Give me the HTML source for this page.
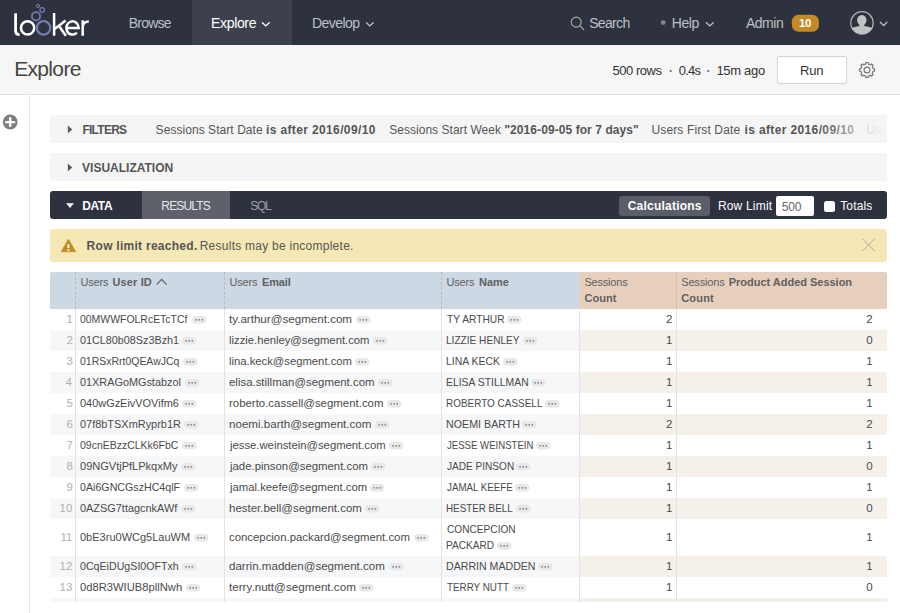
<!DOCTYPE html>
<html><head><meta charset="utf-8">
<style>
*{box-sizing:border-box;margin:0;padding:0}
html,body{width:900px;height:613px;overflow:hidden;background:#fff;font-family:"Liberation Sans",sans-serif}
.tx{position:absolute;white-space:nowrap;line-height:1}
.b{position:absolute}
.rw{position:absolute;left:50px;width:837px}
.pill{position:absolute;width:14.5px;height:7.5px;border-radius:4px;background:#e9e9ea}
.pill i{position:absolute;top:3px;width:1.6px;height:1.6px;border-radius:1px;background:#9a9a9a}
.pill i:nth-child(1){left:3.8px} .pill i:nth-child(2){left:6.5px} .pill i:nth-child(3){left:9.2px}
</style></head><body>
<!-- nav -->
<div class="b" style="left:0;top:0;width:900px;height:45px;background:#2d323e"></div>
<div class="b" style="left:192px;top:0;width:100px;height:45px;background:#3c414d"></div>
<svg class="b" style="left:0;top:0" width="900" height="45" viewBox="0 0 900 45">
 <g fill="none" stroke-linecap="round">
  <path d="M15.6,13.3 V31 Q15.6,34.6 19.6,34.6" stroke="#fff" stroke-width="2.8" stroke-linecap="butt"/>
  <circle cx="27.6" cy="27.9" r="6.6" stroke="#fff" stroke-width="2.5"/>
  <circle cx="43.6" cy="27.9" r="6.7" stroke="#717cb0" stroke-width="2.3"/>
  <circle cx="36" cy="16.3" r="4.1" stroke="#717cb0" stroke-width="1.8"/>
  <circle cx="42.2" cy="9.9" r="2.3" stroke="#717cb0" stroke-width="1.3"/>
  <circle cx="38" cy="5.9" r="1.6" stroke="#80859e" stroke-width="1"/>
  <path d="M54.1,13 V35.7" stroke="#fff" stroke-width="2.5" stroke-linecap="butt"/>
  <path d="M54.6,29 L65.6,20.4 M58.6,25.6 L65.9,35.7" stroke="#fff" stroke-width="2.5" stroke-linecap="butt"/>
  <path d="M66.5,27.9 H78.7 A6.2,6.6 0 1 0 76.9,32.6" stroke="#fff" stroke-width="2.5" stroke-linecap="butt"/>
  <path d="M82.7,20.3 V35.7 M82.7,26.5 Q83.3,21.4 88.8,21.4" stroke="#fff" stroke-width="2.5" stroke-linecap="butt"/>
  <path d="M262.4,22.7 L265.8,25.9 L269.2,22.7" stroke="#fff" stroke-width="1.35"/>
  <path d="M366.4,22.7 L369.8,25.9 L373.2,22.7" stroke="#bcc0c8" stroke-width="1.35"/>
  <path d="M706.4,22.7 L709.8,25.9 L713.2,22.7" stroke="#bcc0c8" stroke-width="1.35"/>
  <path d="M880.3,22.3 L883.6,25.6 L886.9,22.3" stroke="#c2c2c2" stroke-width="1.3"/>
  <circle cx="576.2" cy="22.1" r="5" stroke="#a9acb3" stroke-width="1.1"/>
  <path d="M579.8,25.7 L583.7,29.6" stroke="#a9acb3" stroke-width="1.2"/>
  <circle cx="862" cy="22.9" r="11.2" stroke="#b4b4b4" stroke-width="1.2"/>
 </g>
 <circle cx="663.2" cy="22.6" r="2.4" fill="#85868b"/>
 <rect x="791.8" y="14.8" width="27.2" height="17" rx="6.8" fill="#c28b26"/>
 <clipPath id="av"><circle cx="862" cy="22.9" r="11.2"/></clipPath>
 <g clip-path="url(#av)" fill="#c3c3c3">
  <ellipse cx="861.8" cy="20.2" rx="4.7" ry="5.3"/>
  <rect x="859.3" y="23" width="5" height="4"/>
  <path d="M849,40 L849,30.5 Q852,26.2 862,25.9 Q872,26.2 875,30.5 L875,40 Z"/>
 </g>
</svg>
<!-- header -->
<div class="b" style="left:0;top:45px;width:900px;height:49px;background:#f6f6f6"></div>
<div class="b" style="left:0;top:94px;width:900px;height:1px;background:#dfe0e3"></div>
<div class="b" style="left:777px;top:56px;width:70px;height:28px;background:#fff;border:1px solid #d3d3d3;border-radius:2px"></div>
<svg class="b" style="left:0;top:45px" width="900" height="48" viewBox="0 45 900 48">
 <circle cx="670.7" cy="71" r="1.1" fill="#666"/>
 <circle cx="708.2" cy="71" r="1.1" fill="#666"/>
 <path d="M865.81,62.49 L868.19,62.49 L868.24,63.92 L870.42,64.83 L871.47,63.85 L873.15,65.53 L872.17,66.58 L873.08,68.76 L874.51,68.81 L874.51,71.19 L873.08,71.24 L872.17,73.42 L873.15,74.47 L871.47,76.15 L870.42,75.17 L868.24,76.08 L868.19,77.51 L865.81,77.51 L865.76,76.08 L863.58,75.17 L862.53,76.15 L860.85,74.47 L861.83,73.42 L860.92,71.24 L859.49,71.19 L859.49,68.81 L860.92,68.76 L861.83,66.58 L860.85,65.53 L862.53,63.85 L863.58,64.83 L865.76,63.92 Z" fill="none" stroke="#787878" stroke-width="1.2" stroke-linejoin="round"/>
 <circle cx="867" cy="70" r="2.9" fill="none" stroke="#787878" stroke-width="1.2"/>
</svg>
<!-- left rail -->
<div class="b" style="left:29px;top:95px;width:1px;height:518px;background:#e3e4e7"></div>
<svg class="b" style="left:0;top:110px" width="24" height="24" viewBox="0 110 24 24">
 <circle cx="10.2" cy="122" r="7.4" fill="#7f7f82"/>
 <rect x="5.2" y="121.1" width="10" height="2.1" fill="#fff"/>
 <rect x="9" y="117.2" width="2.4" height="9.7" fill="#fff"/>
</svg>
<!-- filter / viz bars -->
<div class="b" style="left:50px;top:115px;width:837px;height:28px;background:#f5f5f5;border-radius:3px"></div>
<div class="b" style="left:50px;top:153px;width:837px;height:28px;background:#f5f5f5;border-radius:3px"></div>
<svg class="b" style="left:60px;top:120px" width="20" height="60" viewBox="60 120 20 60">
 <path d="M67.8,125.6 L72.3,129.4 L67.8,133.2 Z" fill="#5a5a5a"/>
 <path d="M67.8,163.6 L72.3,167.4 L67.8,171.2 Z" fill="#5a5a5a"/>
</svg>
<!-- data bar -->
<div class="b" style="left:50px;top:191px;width:837px;height:28px;background:#2d323e;border-radius:3px"></div>
<div class="b" style="left:142px;top:191px;width:88px;height:28px;background:#5e616a"></div>
<div class="b" style="left:619px;top:196px;width:91px;height:20px;background:#5b5e68;border-radius:3px"></div>
<div class="b" style="left:776px;top:196px;width:38px;height:20px;background:#fff;border-radius:2px"></div>
<div class="b" style="left:824.3px;top:200.5px;width:11px;height:11px;background:#fff;border-radius:2.5px"></div>
<svg class="b" style="left:60px;top:195px" width="20" height="20" viewBox="60 195 20 20">
 <path d="M66.1,203.2 L73.9,203.2 L70,207.9 Z" fill="#fff"/>
</svg>
<!-- warning -->
<div class="b" style="left:50px;top:229px;width:837px;height:33px;background:#f5e8b4;border-radius:3px"></div>
<svg class="b" style="left:55px;top:232px" width="835" height="28" viewBox="55 232 835 28">
 <path d="M68.45,239.1 L75.8,251.8 L61.1,251.8 Z" fill="#c28d27" stroke="#c28d27" stroke-width="0.6" stroke-linejoin="round"/>
 <rect x="67.55" y="244.2" width="1.8" height="3.8" fill="#fff"/>
 <rect x="67.55" y="249.1" width="1.8" height="1.8" fill="#fff"/>
 <path d="M862.3,238.6 L874.8,251.1 M874.8,238.6 L862.3,251.1" stroke="#c9bba6" stroke-width="1.1"/>
</svg>
<!-- table -->
<div class="b" style="left:50px;top:272px;width:529px;height:37px;background:#ccd8e4;border-top-left-radius:2px"></div>
<div class="b" style="left:579px;top:272px;width:308px;height:37px;background:#e6d0bd;border-top-right-radius:2px"></div>
<div class="rw" style="top:330px;height:21px;background:#f6f7f9"></div>
<div class="rw" style="top:330px;height:21px;left:579px;width:308px;background:#f6f0eb"></div>
<div class="rw" style="top:372px;height:21px;background:#f6f7f9"></div>
<div class="rw" style="top:372px;height:21px;left:579px;width:308px;background:#f6f0eb"></div>
<div class="rw" style="top:414px;height:21px;background:#f6f7f9"></div>
<div class="rw" style="top:414px;height:21px;left:579px;width:308px;background:#f6f0eb"></div>
<div class="rw" style="top:456px;height:21px;background:#f6f7f9"></div>
<div class="rw" style="top:456px;height:21px;left:579px;width:308px;background:#f6f0eb"></div>
<div class="rw" style="top:498px;height:21px;background:#f6f7f9"></div>
<div class="rw" style="top:498px;height:21px;left:579px;width:308px;background:#f6f0eb"></div>
<div class="rw" style="top:556px;height:21px;background:#f6f7f9"></div>
<div class="rw" style="top:556px;height:21px;left:579px;width:308px;background:#f6f0eb"></div>
<div class="rw" style="top:598px;height:4px;background:#f6f7f9"></div>
<div class="rw" style="top:598px;height:4px;left:579px;width:308px;background:#f6f0eb"></div>
<div class="b" style="left:75px;top:272px;width:0;height:37px;border-left:1px dashed #bdbab8"></div>
<div class="b" style="left:224px;top:272px;width:0;height:37px;border-left:1px dashed #bdbab8"></div>
<div class="b" style="left:441px;top:272px;width:0;height:37px;border-left:1px dashed #bdbab8"></div>
<div class="b" style="left:676px;top:272px;width:1px;height:37px;background:#d6bfad"></div>
<div class="b" style="left:75px;top:309px;width:1px;height:293px;background:#e3e3e3"></div>
<div class="b" style="left:224px;top:309px;width:1px;height:293px;background:#e3e3e3"></div>
<div class="b" style="left:441px;top:309px;width:1px;height:293px;background:#e3e3e3"></div>
<div class="b" style="left:579px;top:309px;width:1px;height:293px;background:#e3e3e3"></div>
<div class="b" style="left:676px;top:309px;width:1px;height:293px;background:#e3e3e3"></div>
<svg class="b" style="left:150px;top:272px" width="30" height="20" viewBox="150 272 30 20">
 <path d="M156.6,284.6 L161.6,279.3 L166.6,284.6" fill="none" stroke="#5b5b5b" stroke-width="1.1"/>
</svg>
<div class="tx" style="left:128.80px;top:16.15px;font-size:14px;color:#bcc0c8;letter-spacing:-0.800px">Browse</div>
<div class="tx" style="left:211.00px;top:16.15px;font-size:14px;color:#fff;letter-spacing:-0.333px">Explore</div>
<div class="tx" style="left:312.00px;top:16.15px;font-size:14px;color:#bcc0c8;letter-spacing:-0.567px">Develop</div>
<div class="tx" style="left:589.20px;top:16.15px;font-size:14px;color:#bcc0c8;letter-spacing:-0.660px">Search</div>
<div class="tx" style="left:671.80px;top:16.15px;font-size:14px;color:#bcc0c8;letter-spacing:-0.467px">Help</div>
<div class="tx" style="left:746.00px;top:16.15px;font-size:14px;color:#bcc0c8;letter-spacing:-0.500px">Admin</div>
<div class="tx" style="left:799.00px;top:18.27px;font-size:11.5px;font-weight:bold;color:#fff;letter-spacing:-0.400px">10</div>
<div class="tx" style="left:14.20px;top:58.22px;font-size:21px;color:#444;letter-spacing:-0.667px">Explore</div>
<div class="tx" style="left:612.60px;top:64.00px;font-size:13px;color:#333;letter-spacing:-0.486px">500 rows</div>
<div class="tx" style="left:678.70px;top:64.00px;font-size:13px;color:#333;letter-spacing:-0.767px">0.4s</div>
<div class="tx" style="left:716.40px;top:64.00px;font-size:13px;color:#333;letter-spacing:-0.300px">15m ago</div>
<div class="tx" style="left:800.00px;top:64.00px;font-size:13px;color:#333;letter-spacing:-0.150px">Run</div>
<div class="tx" style="left:82.40px;top:123.84px;font-size:12px;font-weight:bold;color:#555;letter-spacing:-0.733px">FILTERS</div>
<div class="tx" style="left:155.60px;top:123.84px;font-size:12px;color:#555;letter-spacing:0.056px">Sessions Start Date</div>
<div class="tx" style="left:266.00px;top:123.84px;font-size:12px;font-weight:bold;color:#555;letter-spacing:0.367px">is after 2016/09/10</div>
<div class="tx" style="left:389.20px;top:123.84px;font-size:12px;color:#555;letter-spacing:0.033px">Sessions Start Week</div>
<div class="tx" style="left:504.30px;top:123.84px;font-size:12px;font-weight:bold;color:#555;letter-spacing:0.077px">"2016-09-05 for 7 days"</div>
<div class="tx" style="left:651.50px;top:123.84px;font-size:12px;color:#555;letter-spacing:0.127px">Users First Date</div>
<div class="tx" style="left:744.50px;top:123.84px;font-size:12px;font-weight:bold;color:#555;letter-spacing:0.367px">is after 2016/09/10</div>
<div class="tx" style="left:866.60px;top:123.84px;font-size:12px;color:#555;letter-spacing:0.000px">Users</div>
<div class="tx" style="left:82.10px;top:161.84px;font-size:12px;font-weight:bold;color:#555;letter-spacing:0.000px">VISUALIZATION</div>
<div class="tx" style="left:82.30px;top:199.84px;font-size:12px;font-weight:bold;color:#fff;letter-spacing:-0.433px">DATA</div>
<div class="tx" style="left:161.30px;top:199.84px;font-size:12px;color:#e6e7ea;letter-spacing:-0.833px">RESULTS</div>
<div class="tx" style="left:250.30px;top:199.84px;font-size:12px;color:#9c9fa6;letter-spacing:-1.300px">SQL</div>
<div class="tx" style="left:627.70px;top:199.84px;font-size:12px;font-weight:bold;color:#fff;letter-spacing:0.227px">Calculations</div>
<div class="tx" style="left:717.90px;top:199.84px;font-size:12px;color:#fff;letter-spacing:0.188px">Row Limit</div>
<div class="tx" style="left:781.70px;top:200.84px;font-size:12px;color:#666;letter-spacing:-0.200px">500</div>
<div class="tx" style="left:840.20px;top:199.84px;font-size:12px;color:#fff;letter-spacing:0.160px">Totals</div>
<div class="tx" style="left:86.60px;top:239.84px;font-size:12px;font-weight:bold;color:#555;letter-spacing:0.271px">Row limit reached.</div>
<div class="tx" style="left:199.70px;top:239.84px;font-size:12px;color:#555;letter-spacing:0.252px">Results may be incomplete.</div>
<div class="tx" style="left:80.50px;top:276.69px;font-size:11px;color:#606060;letter-spacing:-0.188px">Users</div>
<div class="tx" style="left:112.50px;top:276.69px;font-size:11px;font-weight:bold;color:#606060;letter-spacing:0.125px">User ID</div>
<div class="tx" style="left:229.50px;top:276.69px;font-size:11px;color:#606060;letter-spacing:-0.188px">Users</div>
<div class="tx" style="left:262.00px;top:276.69px;font-size:11px;font-weight:bold;color:#606060;letter-spacing:-0.125px">Email</div>
<div class="tx" style="left:446.50px;top:276.69px;font-size:11px;color:#606060;letter-spacing:-0.188px">Users</div>
<div class="tx" style="left:479.00px;top:276.69px;font-size:11px;font-weight:bold;color:#606060;letter-spacing:0.000px">Name</div>
<div class="tx" style="left:584.50px;top:276.69px;font-size:11px;color:#606060;letter-spacing:-0.214px">Sessions</div>
<div class="tx" style="left:584.50px;top:292.69px;font-size:11px;font-weight:bold;color:#606060;letter-spacing:0.025px">Count</div>
<div class="tx" style="left:681.20px;top:276.69px;font-size:11px;color:#606060;letter-spacing:-0.143px">Sessions</div>
<div class="tx" style="left:728.80px;top:276.69px;font-size:11px;font-weight:bold;color:#606060;letter-spacing:-0.020px">Product Added Session</div>
<div class="tx" style="left:681.20px;top:292.69px;font-size:11px;font-weight:bold;color:#606060;letter-spacing:0.200px">Count</div>
<div class="tx" style="left:66.50px;top:314.27px;font-size:11.5px;color:#b0b0b0;letter-spacing:0.000px">1</div>
<div class="tx" style="left:80.20px;top:314.27px;font-size:11.5px;color:#4a4a4a;transform:scaleX(0.9084);transform-origin:0 0">00MWWFOLRcETcTCf</div>
<div class="tx" style="left:229.40px;top:314.27px;font-size:11.5px;color:#4a4a4a;transform:scaleX(1.0082);transform-origin:0 0">ty.arthur@segment.com</div>
<div class="tx" style="left:446.60px;top:314.27px;font-size:11.5px;color:#4a4a4a;transform:scaleX(0.8891);transform-origin:0 0">TY ARTHUR</div>
<div class="tx" style="left:666.00px;top:314.27px;font-size:11.5px;color:#4a4a4a;letter-spacing:0.000px">2</div>
<div class="tx" style="left:866.20px;top:314.27px;font-size:11.5px;color:#4a4a4a;letter-spacing:0.000px">2</div>
<div class="tx" style="left:66.50px;top:335.27px;font-size:11.5px;color:#b0b0b0;letter-spacing:0.000px">2</div>
<div class="tx" style="left:80.20px;top:335.27px;font-size:11.5px;color:#4a4a4a;transform:scaleX(0.9390);transform-origin:0 0">01CL80b08Sz3Bzh1</div>
<div class="tx" style="left:229.40px;top:335.27px;font-size:11.5px;color:#4a4a4a;transform:scaleX(0.9797);transform-origin:0 0">lizzie.henley@segment.com</div>
<div class="tx" style="left:445.72px;top:335.27px;font-size:11.5px;color:#4a4a4a;transform:scaleX(0.8783);transform-origin:0 0">LIZZIE HENLEY</div>
<div class="tx" style="left:666.00px;top:335.27px;font-size:11.5px;color:#4a4a4a;letter-spacing:0.000px">1</div>
<div class="tx" style="left:866.20px;top:335.27px;font-size:11.5px;color:#4a4a4a;letter-spacing:0.000px">0</div>
<div class="tx" style="left:66.50px;top:356.27px;font-size:11.5px;color:#b0b0b0;letter-spacing:0.000px">3</div>
<div class="tx" style="left:80.20px;top:356.27px;font-size:11.5px;color:#4a4a4a;transform:scaleX(0.9110);transform-origin:0 0">01RSxRrt0QEAwJCq</div>
<div class="tx" style="left:229.40px;top:356.27px;font-size:11.5px;color:#4a4a4a;transform:scaleX(0.9800);transform-origin:0 0">lina.keck@segment.com</div>
<div class="tx" style="left:445.69px;top:356.27px;font-size:11.5px;color:#4a4a4a;transform:scaleX(0.9086);transform-origin:0 0">LINA KECK</div>
<div class="tx" style="left:666.00px;top:356.27px;font-size:11.5px;color:#4a4a4a;letter-spacing:0.000px">1</div>
<div class="tx" style="left:866.20px;top:356.27px;font-size:11.5px;color:#4a4a4a;letter-spacing:0.000px">1</div>
<div class="tx" style="left:65.50px;top:377.27px;font-size:11.5px;color:#b0b0b0;letter-spacing:0.000px">4</div>
<div class="tx" style="left:80.20px;top:377.27px;font-size:11.5px;color:#4a4a4a;transform:scaleX(0.9449);transform-origin:0 0">01XRAGoMGstabzol</div>
<div class="tx" style="left:229.40px;top:377.27px;font-size:11.5px;color:#4a4a4a;transform:scaleX(0.9932);transform-origin:0 0">elisa.stillman@segment.com</div>
<div class="tx" style="left:445.70px;top:377.27px;font-size:11.5px;color:#4a4a4a;transform:scaleX(0.9044);transform-origin:0 0">ELISA STILLMAN</div>
<div class="tx" style="left:666.00px;top:377.27px;font-size:11.5px;color:#4a4a4a;letter-spacing:0.000px">1</div>
<div class="tx" style="left:866.20px;top:377.27px;font-size:11.5px;color:#4a4a4a;letter-spacing:0.000px">1</div>
<div class="tx" style="left:66.50px;top:398.27px;font-size:11.5px;color:#b0b0b0;letter-spacing:0.000px">5</div>
<div class="tx" style="left:80.20px;top:398.27px;font-size:11.5px;color:#4a4a4a;transform:scaleX(0.9510);transform-origin:0 0">040wGzEivVOVifm6</div>
<div class="tx" style="left:229.40px;top:398.27px;font-size:11.5px;color:#4a4a4a;transform:scaleX(0.9935);transform-origin:0 0">roberto.cassell@segment.com</div>
<div class="tx" style="left:445.73px;top:398.27px;font-size:11.5px;color:#4a4a4a;transform:scaleX(0.8655);transform-origin:0 0">ROBERTO CASSELL</div>
<div class="tx" style="left:666.00px;top:398.27px;font-size:11.5px;color:#4a4a4a;letter-spacing:0.000px">1</div>
<div class="tx" style="left:866.20px;top:398.27px;font-size:11.5px;color:#4a4a4a;letter-spacing:0.000px">1</div>
<div class="tx" style="left:66.50px;top:419.27px;font-size:11.5px;color:#b0b0b0;letter-spacing:0.000px">6</div>
<div class="tx" style="left:80.20px;top:419.27px;font-size:11.5px;color:#4a4a4a;transform:scaleX(0.9509);transform-origin:0 0">07f8bTSXmRyprb1R</div>
<div class="tx" style="left:229.40px;top:419.27px;font-size:11.5px;color:#4a4a4a;transform:scaleX(1.0071);transform-origin:0 0">noemi.barth@segment.com</div>
<div class="tx" style="left:445.67px;top:419.27px;font-size:11.5px;color:#4a4a4a;transform:scaleX(0.9295);transform-origin:0 0">NOEMI BARTH</div>
<div class="tx" style="left:666.00px;top:419.27px;font-size:11.5px;color:#4a4a4a;letter-spacing:0.000px">2</div>
<div class="tx" style="left:866.20px;top:419.27px;font-size:11.5px;color:#4a4a4a;letter-spacing:0.000px">2</div>
<div class="tx" style="left:66.50px;top:440.27px;font-size:11.5px;color:#b0b0b0;letter-spacing:0.000px">7</div>
<div class="tx" style="left:80.20px;top:440.27px;font-size:11.5px;color:#4a4a4a;transform:scaleX(0.9102);transform-origin:0 0">09cnEBzzCLKk6FbC</div>
<div class="tx" style="left:230.38px;top:440.27px;font-size:11.5px;color:#4a4a4a;transform:scaleX(0.9811);transform-origin:0 0">jesse.weinstein@segment.com</div>
<div class="tx" style="left:446.60px;top:440.27px;font-size:11.5px;color:#4a4a4a;transform:scaleX(0.8350);transform-origin:0 0">JESSE WEINSTEIN</div>
<div class="tx" style="left:666.00px;top:440.27px;font-size:11.5px;color:#4a4a4a;letter-spacing:0.000px">1</div>
<div class="tx" style="left:866.20px;top:440.27px;font-size:11.5px;color:#4a4a4a;letter-spacing:0.000px">1</div>
<div class="tx" style="left:66.50px;top:461.27px;font-size:11.5px;color:#b0b0b0;letter-spacing:0.000px">8</div>
<div class="tx" style="left:80.20px;top:461.27px;font-size:11.5px;color:#4a4a4a;transform:scaleX(0.9588);transform-origin:0 0">09NGVtjPfLPkqxMy</div>
<div class="tx" style="left:230.39px;top:461.27px;font-size:11.5px;color:#4a4a4a;transform:scaleX(0.9886);transform-origin:0 0">jade.pinson@segment.com</div>
<div class="tx" style="left:446.60px;top:461.27px;font-size:11.5px;color:#4a4a4a;transform:scaleX(0.8763);transform-origin:0 0">JADE PINSON</div>
<div class="tx" style="left:666.00px;top:461.27px;font-size:11.5px;color:#4a4a4a;letter-spacing:0.000px">1</div>
<div class="tx" style="left:866.20px;top:461.27px;font-size:11.5px;color:#4a4a4a;letter-spacing:0.000px">0</div>
<div class="tx" style="left:66.50px;top:482.27px;font-size:11.5px;color:#b0b0b0;letter-spacing:0.000px">9</div>
<div class="tx" style="left:80.20px;top:482.27px;font-size:11.5px;color:#4a4a4a;transform:scaleX(0.9269);transform-origin:0 0">0Ai6GNCGszHC4qlF</div>
<div class="tx" style="left:230.38px;top:482.27px;font-size:11.5px;color:#4a4a4a;transform:scaleX(0.9829);transform-origin:0 0">jamal.keefe@segment.com</div>
<div class="tx" style="left:446.60px;top:482.27px;font-size:11.5px;color:#4a4a4a;transform:scaleX(0.8481);transform-origin:0 0">JAMAL KEEFE</div>
<div class="tx" style="left:666.00px;top:482.27px;font-size:11.5px;color:#4a4a4a;letter-spacing:0.000px">1</div>
<div class="tx" style="left:866.20px;top:482.27px;font-size:11.5px;color:#4a4a4a;letter-spacing:0.000px">1</div>
<div class="tx" style="left:59.50px;top:503.27px;font-size:11.5px;color:#b0b0b0;letter-spacing:0.000px">10</div>
<div class="tx" style="left:80.20px;top:503.27px;font-size:11.5px;color:#4a4a4a;transform:scaleX(0.9495);transform-origin:0 0">0AZSG7ttagcnkAWf</div>
<div class="tx" style="left:229.40px;top:503.27px;font-size:11.5px;color:#4a4a4a;transform:scaleX(0.9977);transform-origin:0 0">hester.bell@segment.com</div>
<div class="tx" style="left:445.75px;top:503.27px;font-size:11.5px;color:#4a4a4a;transform:scaleX(0.8545);transform-origin:0 0">HESTER BELL</div>
<div class="tx" style="left:666.00px;top:503.27px;font-size:11.5px;color:#4a4a4a;letter-spacing:0.000px">1</div>
<div class="tx" style="left:866.20px;top:503.27px;font-size:11.5px;color:#4a4a4a;letter-spacing:0.000px">0</div>
<div class="tx" style="left:60.50px;top:532.27px;font-size:11.5px;color:#b0b0b0;letter-spacing:0.000px">11</div>
<div class="tx" style="left:80.20px;top:532.27px;font-size:11.5px;color:#4a4a4a;transform:scaleX(0.9574);transform-origin:0 0">0bE3ru0WCg5LauWM</div>
<div class="tx" style="left:229.40px;top:532.27px;font-size:11.5px;color:#4a4a4a;transform:scaleX(0.9885);transform-origin:0 0">concepcion.packard@segment.com</div>
<div class="tx" style="left:446.60px;top:524.27px;font-size:11.5px;color:#4a4a4a;transform:scaleX(0.8808);transform-origin:0 0">CONCEPCION</div>
<div class="tx" style="left:445.72px;top:540.27px;font-size:11.5px;color:#4a4a4a;transform:scaleX(0.8759);transform-origin:0 0">PACKARD</div>
<div class="tx" style="left:666.00px;top:532.27px;font-size:11.5px;color:#4a4a4a;letter-spacing:0.000px">1</div>
<div class="tx" style="left:866.20px;top:532.27px;font-size:11.5px;color:#4a4a4a;letter-spacing:0.000px">1</div>
<div class="tx" style="left:59.50px;top:561.27px;font-size:11.5px;color:#b0b0b0;letter-spacing:0.000px">12</div>
<div class="tx" style="left:80.20px;top:561.27px;font-size:11.5px;color:#4a4a4a;transform:scaleX(0.9255);transform-origin:0 0">0CqEiDUgSI0OFTxh</div>
<div class="tx" style="left:229.40px;top:561.27px;font-size:11.5px;color:#4a4a4a;transform:scaleX(1.0065);transform-origin:0 0">darrin.madden@segment.com</div>
<div class="tx" style="left:445.68px;top:561.27px;font-size:11.5px;color:#4a4a4a;transform:scaleX(0.9219);transform-origin:0 0">DARRIN MADDEN</div>
<div class="tx" style="left:666.00px;top:561.27px;font-size:11.5px;color:#4a4a4a;letter-spacing:0.000px">1</div>
<div class="tx" style="left:866.20px;top:561.27px;font-size:11.5px;color:#4a4a4a;letter-spacing:0.000px">1</div>
<div class="tx" style="left:59.50px;top:582.27px;font-size:11.5px;color:#b0b0b0;letter-spacing:0.000px">13</div>
<div class="tx" style="left:80.20px;top:582.27px;font-size:11.5px;color:#4a4a4a;transform:scaleX(0.9743);transform-origin:0 0">0d8R3WIUB8pllNwh</div>
<div class="tx" style="left:229.40px;top:582.27px;font-size:11.5px;color:#4a4a4a;transform:scaleX(1.0128);transform-origin:0 0">terry.nutt@segment.com</div>
<div class="tx" style="left:446.60px;top:582.27px;font-size:11.5px;color:#4a4a4a;transform:scaleX(0.8548);transform-origin:0 0">TERRY NUTT</div>
<div class="tx" style="left:666.00px;top:582.27px;font-size:11.5px;color:#4a4a4a;letter-spacing:0.000px">1</div>
<div class="tx" style="left:866.20px;top:582.27px;font-size:11.5px;color:#4a4a4a;letter-spacing:0.000px">0</div>
<svg class="b" style="left:191.50px;top:316.30px" width="15" height="8" viewBox="0 0 15 8"><rect x="0" y="0" width="14.5" height="7.5" rx="3.75" fill="#e8e8e9"/><circle cx="4.1" cy="3.8" r="0.9" fill="#808080"/><circle cx="7.15" cy="3.8" r="0.9" fill="#808080"/><circle cx="10.3" cy="3.8" r="0.9" fill="#808080"/></svg>
<svg class="b" style="left:355.60px;top:316.30px" width="15" height="8" viewBox="0 0 15 8"><rect x="0" y="0" width="14.5" height="7.5" rx="3.75" fill="#e8e8e9"/><circle cx="4.1" cy="3.8" r="0.9" fill="#808080"/><circle cx="7.15" cy="3.8" r="0.9" fill="#808080"/><circle cx="10.3" cy="3.8" r="0.9" fill="#808080"/></svg>
<svg class="b" style="left:506.70px;top:316.30px" width="15" height="8" viewBox="0 0 15 8"><rect x="0" y="0" width="14.5" height="7.5" rx="3.75" fill="#e8e8e9"/><circle cx="4.1" cy="3.8" r="0.9" fill="#808080"/><circle cx="7.15" cy="3.8" r="0.9" fill="#808080"/><circle cx="10.3" cy="3.8" r="0.9" fill="#808080"/></svg>
<svg class="b" style="left:182.00px;top:337.30px" width="15" height="8" viewBox="0 0 15 8"><rect x="0" y="0" width="14.5" height="7.5" rx="3.75" fill="#e8e8e9"/><circle cx="4.1" cy="3.8" r="0.9" fill="#808080"/><circle cx="7.15" cy="3.8" r="0.9" fill="#808080"/><circle cx="10.3" cy="3.8" r="0.9" fill="#808080"/></svg>
<svg class="b" style="left:372.70px;top:337.30px" width="15" height="8" viewBox="0 0 15 8"><rect x="0" y="0" width="14.5" height="7.5" rx="3.75" fill="#e8e8e9"/><circle cx="4.1" cy="3.8" r="0.9" fill="#808080"/><circle cx="7.15" cy="3.8" r="0.9" fill="#808080"/><circle cx="10.3" cy="3.8" r="0.9" fill="#808080"/></svg>
<svg class="b" style="left:522.70px;top:337.30px" width="15" height="8" viewBox="0 0 15 8"><rect x="0" y="0" width="14.5" height="7.5" rx="3.75" fill="#e8e8e9"/><circle cx="4.1" cy="3.8" r="0.9" fill="#808080"/><circle cx="7.15" cy="3.8" r="0.9" fill="#808080"/><circle cx="10.3" cy="3.8" r="0.9" fill="#808080"/></svg>
<svg class="b" style="left:182.70px;top:358.30px" width="15" height="8" viewBox="0 0 15 8"><rect x="0" y="0" width="14.5" height="7.5" rx="3.75" fill="#e8e8e9"/><circle cx="4.1" cy="3.8" r="0.9" fill="#808080"/><circle cx="7.15" cy="3.8" r="0.9" fill="#808080"/><circle cx="10.3" cy="3.8" r="0.9" fill="#808080"/></svg>
<svg class="b" style="left:355.10px;top:358.30px" width="15" height="8" viewBox="0 0 15 8"><rect x="0" y="0" width="14.5" height="7.5" rx="3.75" fill="#e8e8e9"/><circle cx="4.1" cy="3.8" r="0.9" fill="#808080"/><circle cx="7.15" cy="3.8" r="0.9" fill="#808080"/><circle cx="10.3" cy="3.8" r="0.9" fill="#808080"/></svg>
<svg class="b" style="left:502.50px;top:358.30px" width="15" height="8" viewBox="0 0 15 8"><rect x="0" y="0" width="14.5" height="7.5" rx="3.75" fill="#e8e8e9"/><circle cx="4.1" cy="3.8" r="0.9" fill="#808080"/><circle cx="7.15" cy="3.8" r="0.9" fill="#808080"/><circle cx="10.3" cy="3.8" r="0.9" fill="#808080"/></svg>
<svg class="b" style="left:184.50px;top:379.30px" width="15" height="8" viewBox="0 0 15 8"><rect x="0" y="0" width="14.5" height="7.5" rx="3.75" fill="#e8e8e9"/><circle cx="4.1" cy="3.8" r="0.9" fill="#808080"/><circle cx="7.15" cy="3.8" r="0.9" fill="#808080"/><circle cx="10.3" cy="3.8" r="0.9" fill="#808080"/></svg>
<svg class="b" style="left:377.60px;top:379.30px" width="15" height="8" viewBox="0 0 15 8"><rect x="0" y="0" width="14.5" height="7.5" rx="3.75" fill="#e8e8e9"/><circle cx="4.1" cy="3.8" r="0.9" fill="#808080"/><circle cx="7.15" cy="3.8" r="0.9" fill="#808080"/><circle cx="10.3" cy="3.8" r="0.9" fill="#808080"/></svg>
<svg class="b" style="left:531.20px;top:379.30px" width="15" height="8" viewBox="0 0 15 8"><rect x="0" y="0" width="14.5" height="7.5" rx="3.75" fill="#e8e8e9"/><circle cx="4.1" cy="3.8" r="0.9" fill="#808080"/><circle cx="7.15" cy="3.8" r="0.9" fill="#808080"/><circle cx="10.3" cy="3.8" r="0.9" fill="#808080"/></svg>
<svg class="b" style="left:182.30px;top:400.30px" width="15" height="8" viewBox="0 0 15 8"><rect x="0" y="0" width="14.5" height="7.5" rx="3.75" fill="#e8e8e9"/><circle cx="4.1" cy="3.8" r="0.9" fill="#808080"/><circle cx="7.15" cy="3.8" r="0.9" fill="#808080"/><circle cx="10.3" cy="3.8" r="0.9" fill="#808080"/></svg>
<svg class="b" style="left:386.60px;top:400.30px" width="15" height="8" viewBox="0 0 15 8"><rect x="0" y="0" width="14.5" height="7.5" rx="3.75" fill="#e8e8e9"/><circle cx="4.1" cy="3.8" r="0.9" fill="#808080"/><circle cx="7.15" cy="3.8" r="0.9" fill="#808080"/><circle cx="10.3" cy="3.8" r="0.9" fill="#808080"/></svg>
<svg class="b" style="left:545.00px;top:400.30px" width="15" height="8" viewBox="0 0 15 8"><rect x="0" y="0" width="14.5" height="7.5" rx="3.75" fill="#e8e8e9"/><circle cx="4.1" cy="3.8" r="0.9" fill="#808080"/><circle cx="7.15" cy="3.8" r="0.9" fill="#808080"/><circle cx="10.3" cy="3.8" r="0.9" fill="#808080"/></svg>
<svg class="b" style="left:184.20px;top:421.30px" width="15" height="8" viewBox="0 0 15 8"><rect x="0" y="0" width="14.5" height="7.5" rx="3.75" fill="#e8e8e9"/><circle cx="4.1" cy="3.8" r="0.9" fill="#808080"/><circle cx="7.15" cy="3.8" r="0.9" fill="#808080"/><circle cx="10.3" cy="3.8" r="0.9" fill="#808080"/></svg>
<svg class="b" style="left:374.60px;top:421.30px" width="15" height="8" viewBox="0 0 15 8"><rect x="0" y="0" width="14.5" height="7.5" rx="3.75" fill="#e8e8e9"/><circle cx="4.1" cy="3.8" r="0.9" fill="#808080"/><circle cx="7.15" cy="3.8" r="0.9" fill="#808080"/><circle cx="10.3" cy="3.8" r="0.9" fill="#808080"/></svg>
<svg class="b" style="left:522.30px;top:421.30px" width="15" height="8" viewBox="0 0 15 8"><rect x="0" y="0" width="14.5" height="7.5" rx="3.75" fill="#e8e8e9"/><circle cx="4.1" cy="3.8" r="0.9" fill="#808080"/><circle cx="7.15" cy="3.8" r="0.9" fill="#808080"/><circle cx="10.3" cy="3.8" r="0.9" fill="#808080"/></svg>
<svg class="b" style="left:181.70px;top:442.30px" width="15" height="8" viewBox="0 0 15 8"><rect x="0" y="0" width="14.5" height="7.5" rx="3.75" fill="#e8e8e9"/><circle cx="4.1" cy="3.8" r="0.9" fill="#808080"/><circle cx="7.15" cy="3.8" r="0.9" fill="#808080"/><circle cx="10.3" cy="3.8" r="0.9" fill="#808080"/></svg>
<svg class="b" style="left:388.60px;top:442.30px" width="15" height="8" viewBox="0 0 15 8"><rect x="0" y="0" width="14.5" height="7.5" rx="3.75" fill="#e8e8e9"/><circle cx="4.1" cy="3.8" r="0.9" fill="#808080"/><circle cx="7.15" cy="3.8" r="0.9" fill="#808080"/><circle cx="10.3" cy="3.8" r="0.9" fill="#808080"/></svg>
<svg class="b" style="left:535.80px;top:442.30px" width="15" height="8" viewBox="0 0 15 8"><rect x="0" y="0" width="14.5" height="7.5" rx="3.75" fill="#e8e8e9"/><circle cx="4.1" cy="3.8" r="0.9" fill="#808080"/><circle cx="7.15" cy="3.8" r="0.9" fill="#808080"/><circle cx="10.3" cy="3.8" r="0.9" fill="#808080"/></svg>
<svg class="b" style="left:181.20px;top:463.30px" width="15" height="8" viewBox="0 0 15 8"><rect x="0" y="0" width="14.5" height="7.5" rx="3.75" fill="#e8e8e9"/><circle cx="4.1" cy="3.8" r="0.9" fill="#808080"/><circle cx="7.15" cy="3.8" r="0.9" fill="#808080"/><circle cx="10.3" cy="3.8" r="0.9" fill="#808080"/></svg>
<svg class="b" style="left:371.00px;top:463.30px" width="15" height="8" viewBox="0 0 15 8"><rect x="0" y="0" width="14.5" height="7.5" rx="3.75" fill="#e8e8e9"/><circle cx="4.1" cy="3.8" r="0.9" fill="#808080"/><circle cx="7.15" cy="3.8" r="0.9" fill="#808080"/><circle cx="10.3" cy="3.8" r="0.9" fill="#808080"/></svg>
<svg class="b" style="left:516.40px;top:463.30px" width="15" height="8" viewBox="0 0 15 8"><rect x="0" y="0" width="14.5" height="7.5" rx="3.75" fill="#e8e8e9"/><circle cx="4.1" cy="3.8" r="0.9" fill="#808080"/><circle cx="7.15" cy="3.8" r="0.9" fill="#808080"/><circle cx="10.3" cy="3.8" r="0.9" fill="#808080"/></svg>
<svg class="b" style="left:183.50px;top:484.30px" width="15" height="8" viewBox="0 0 15 8"><rect x="0" y="0" width="14.5" height="7.5" rx="3.75" fill="#e8e8e9"/><circle cx="4.1" cy="3.8" r="0.9" fill="#808080"/><circle cx="7.15" cy="3.8" r="0.9" fill="#808080"/><circle cx="10.3" cy="3.8" r="0.9" fill="#808080"/></svg>
<svg class="b" style="left:370.20px;top:484.30px" width="15" height="8" viewBox="0 0 15 8"><rect x="0" y="0" width="14.5" height="7.5" rx="3.75" fill="#e8e8e9"/><circle cx="4.1" cy="3.8" r="0.9" fill="#808080"/><circle cx="7.15" cy="3.8" r="0.9" fill="#808080"/><circle cx="10.3" cy="3.8" r="0.9" fill="#808080"/></svg>
<svg class="b" style="left:515.10px;top:484.30px" width="15" height="8" viewBox="0 0 15 8"><rect x="0" y="0" width="14.5" height="7.5" rx="3.75" fill="#e8e8e9"/><circle cx="4.1" cy="3.8" r="0.9" fill="#808080"/><circle cx="7.15" cy="3.8" r="0.9" fill="#808080"/><circle cx="10.3" cy="3.8" r="0.9" fill="#808080"/></svg>
<svg class="b" style="left:181.20px;top:505.30px" width="15" height="8" viewBox="0 0 15 8"><rect x="0" y="0" width="14.5" height="7.5" rx="3.75" fill="#e8e8e9"/><circle cx="4.1" cy="3.8" r="0.9" fill="#808080"/><circle cx="7.15" cy="3.8" r="0.9" fill="#808080"/><circle cx="10.3" cy="3.8" r="0.9" fill="#808080"/></svg>
<svg class="b" style="left:365.30px;top:505.30px" width="15" height="8" viewBox="0 0 15 8"><rect x="0" y="0" width="14.5" height="7.5" rx="3.75" fill="#e8e8e9"/><circle cx="4.1" cy="3.8" r="0.9" fill="#808080"/><circle cx="7.15" cy="3.8" r="0.9" fill="#808080"/><circle cx="10.3" cy="3.8" r="0.9" fill="#808080"/></svg>
<svg class="b" style="left:515.60px;top:505.30px" width="15" height="8" viewBox="0 0 15 8"><rect x="0" y="0" width="14.5" height="7.5" rx="3.75" fill="#e8e8e9"/><circle cx="4.1" cy="3.8" r="0.9" fill="#808080"/><circle cx="7.15" cy="3.8" r="0.9" fill="#808080"/><circle cx="10.3" cy="3.8" r="0.9" fill="#808080"/></svg>
<svg class="b" style="left:193.50px;top:534.30px" width="15" height="8" viewBox="0 0 15 8"><rect x="0" y="0" width="14.5" height="7.5" rx="3.75" fill="#e8e8e9"/><circle cx="4.1" cy="3.8" r="0.9" fill="#808080"/><circle cx="7.15" cy="3.8" r="0.9" fill="#808080"/><circle cx="10.3" cy="3.8" r="0.9" fill="#808080"/></svg>
<svg class="b" style="left:413.50px;top:534.30px" width="15" height="8" viewBox="0 0 15 8"><rect x="0" y="0" width="14.5" height="7.5" rx="3.75" fill="#e8e8e9"/><circle cx="4.1" cy="3.8" r="0.9" fill="#808080"/><circle cx="7.15" cy="3.8" r="0.9" fill="#808080"/><circle cx="10.3" cy="3.8" r="0.9" fill="#808080"/></svg>
<svg class="b" style="left:497.10px;top:542.30px" width="15" height="8" viewBox="0 0 15 8"><rect x="0" y="0" width="14.5" height="7.5" rx="3.75" fill="#e8e8e9"/><circle cx="4.1" cy="3.8" r="0.9" fill="#808080"/><circle cx="7.15" cy="3.8" r="0.9" fill="#808080"/><circle cx="10.3" cy="3.8" r="0.9" fill="#808080"/></svg>
<svg class="b" style="left:181.50px;top:563.30px" width="15" height="8" viewBox="0 0 15 8"><rect x="0" y="0" width="14.5" height="7.5" rx="3.75" fill="#e8e8e9"/><circle cx="4.1" cy="3.8" r="0.9" fill="#808080"/><circle cx="7.15" cy="3.8" r="0.9" fill="#808080"/><circle cx="10.3" cy="3.8" r="0.9" fill="#808080"/></svg>
<svg class="b" style="left:388.60px;top:563.30px" width="15" height="8" viewBox="0 0 15 8"><rect x="0" y="0" width="14.5" height="7.5" rx="3.75" fill="#e8e8e9"/><circle cx="4.1" cy="3.8" r="0.9" fill="#808080"/><circle cx="7.15" cy="3.8" r="0.9" fill="#808080"/><circle cx="10.3" cy="3.8" r="0.9" fill="#808080"/></svg>
<svg class="b" style="left:538.30px;top:563.30px" width="15" height="8" viewBox="0 0 15 8"><rect x="0" y="0" width="14.5" height="7.5" rx="3.75" fill="#e8e8e9"/><circle cx="4.1" cy="3.8" r="0.9" fill="#808080"/><circle cx="7.15" cy="3.8" r="0.9" fill="#808080"/><circle cx="10.3" cy="3.8" r="0.9" fill="#808080"/></svg>
<svg class="b" style="left:185.70px;top:584.30px" width="15" height="8" viewBox="0 0 15 8"><rect x="0" y="0" width="14.5" height="7.5" rx="3.75" fill="#e8e8e9"/><circle cx="4.1" cy="3.8" r="0.9" fill="#808080"/><circle cx="7.15" cy="3.8" r="0.9" fill="#808080"/><circle cx="10.3" cy="3.8" r="0.9" fill="#808080"/></svg>
<svg class="b" style="left:359.20px;top:584.30px" width="15" height="8" viewBox="0 0 15 8"><rect x="0" y="0" width="14.5" height="7.5" rx="3.75" fill="#e8e8e9"/><circle cx="4.1" cy="3.8" r="0.9" fill="#808080"/><circle cx="7.15" cy="3.8" r="0.9" fill="#808080"/><circle cx="10.3" cy="3.8" r="0.9" fill="#808080"/></svg>
<svg class="b" style="left:512.20px;top:584.30px" width="15" height="8" viewBox="0 0 15 8"><rect x="0" y="0" width="14.5" height="7.5" rx="3.75" fill="#e8e8e9"/><circle cx="4.1" cy="3.8" r="0.9" fill="#808080"/><circle cx="7.15" cy="3.8" r="0.9" fill="#808080"/><circle cx="10.3" cy="3.8" r="0.9" fill="#808080"/></svg>
<div class="b" style="left:887px;top:110px;width:13px;height:40px;background:#fff"></div>
<div class="b" style="left:815px;top:116px;width:72px;height:26px;background:linear-gradient(to right, rgba(245,245,245,0) 0%, rgba(245,245,245,0.3) 35%, rgba(245,245,245,0.75) 65%, #f5f5f5 100%)"></div>
</body></html>
